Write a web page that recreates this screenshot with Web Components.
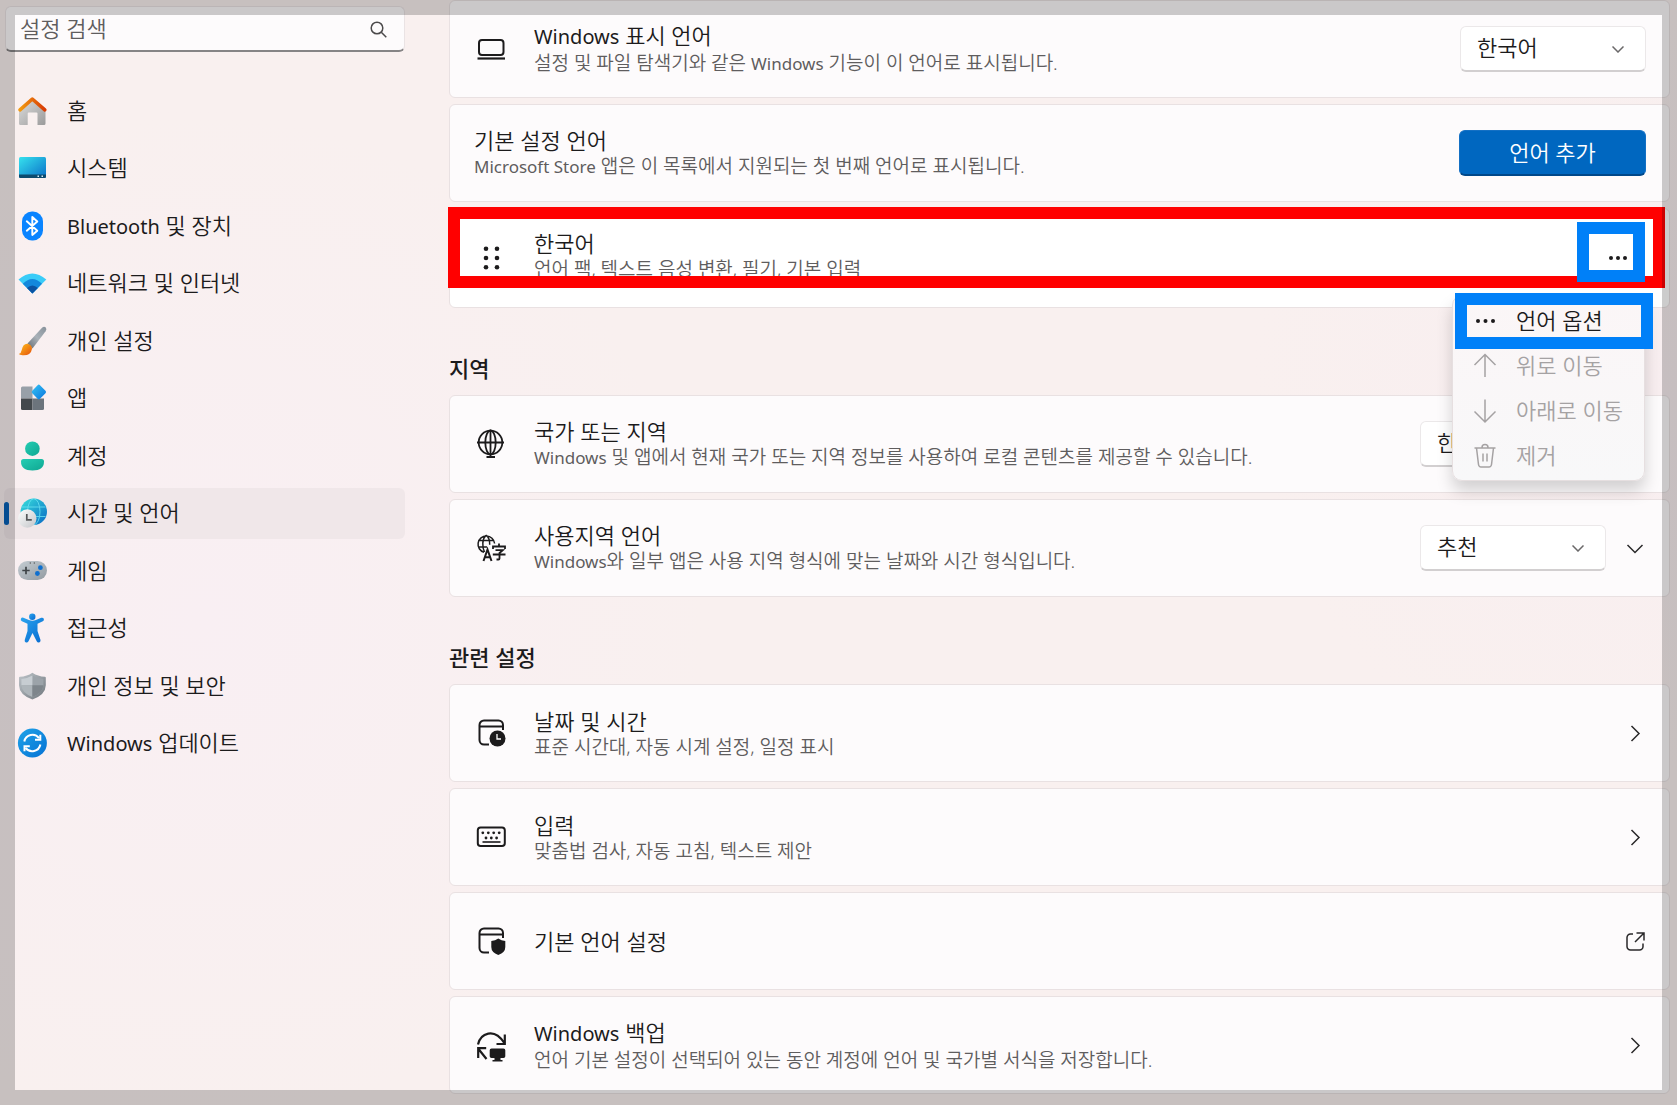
<!DOCTYPE html>
<html lang="ko">
<head>
<meta charset="utf-8">
<title>시간 및 언어</title>
<style>
  html, body { margin: 0; }
  body {
    min-height: 100vh;
    overflow: hidden;
    color: #1c1b1c;
    font-family: "Noto Sans", "Noto Sans CJK KR", sans-serif;
    font-size: 22px;
    font-weight: 350;
    background:
      radial-gradient(circle at 12% 56%, #f9eff3 0, #f9eff300 32%),
      radial-gradient(circle at 98% 35%, #f8eef0 0, #f8eef000 22%),
      #f9f0ef;
  }
</style>
</head>
<body>
<settings-page></settings-page>
<script>
const define = (name, html, setup) => {
  const template = document.createElement('template');
  template.innerHTML = html;
  customElements.define(name, class extends HTMLElement {
    static observedAttributes = ['name'];
    constructor() {
      super();
      this.attachShadow({ mode: 'open' }).append(template.content.cloneNode(true));
    }
    connectedCallback() { if (setup) setup(this, this.shadowRoot); }
    attributeChangedCallback() { if (setup) setup(this, this.shadowRoot); }
  });
};

const icons = {
  home: `<defs><linearGradient id="a" x2="1"><stop stop-color="#f29a10"/><stop offset="1" stop-color="#d83b04"/></linearGradient><linearGradient id="b" x2="1" y2="1"><stop stop-color="#dedede"/><stop offset="1" stop-color="#9a9a9a"/></linearGradient></defs>
    <path d="M2 14 15.3 3 28.5 14v13.500a1.500 1.500 0 0 1-1.500 1.500h-6.500V17.500q0-1-1-1h-7.800q-1 0-1 1V29H3.500A1.500 1.500 0 0 1 2 27.500Z" fill="url(#b)"/><path d="M3 13.800 15.300 3 27.800 13.800" fill="none" stroke="url(#a)" stroke-width="3.600" stroke-linecap="round" stroke-linejoin="round"/>`,
  system: `<defs><linearGradient id="a" x2="1" y2="1"><stop stop-color="#36e2ee"/><stop offset="1" stop-color="#0a6fc8"/></linearGradient></defs>
    <rect x="2" y="4" width="27" height="21" rx="1.500" fill="url(#a)"/><path d="M2 21.500h27v2a1.500 1.500 0 0 1-1.500 1.500h-24A1.500 1.500 0 0 1 2 23.500Z" fill="#0c4a6e"/><path d="M20.500 22.500h1.500v1.500h-1.500zM24.500 22.500h1.500v1.500h-1.500z" fill="#d6effa"/>`,
  bluetooth: `<rect x="5" y=".5" width="21" height="29" rx="10" fill="#0a84ff"/><path d="M9.800 10.300 20.300 19.700 15.300 24V6l5 4.500L9.800 19.700" fill="none" stroke="#fff" stroke-width="1.900" stroke-linejoin="round" stroke-linecap="round"/>`,
  wifi: `<path d="M1.500 11.500Q15.300-.5 29.300 11.500L15.400 25.500Z" fill="#3accf8"/><path d="M5.800 15.800Q15.300 6 25 15.800L15.400 25.500Z" fill="#1388dc"/><path d="M10 20q5.300-5 10.800 0l-5.400 5.500Z" fill="#0b53a2"/>`,
  brush: `<defs><linearGradient id="a" x1="1" x2="0" y2="1"><stop stop-color="#87919a"/><stop offset=".5" stop-color="#a9b1b8"/><stop offset="1" stop-color="#646c74"/></linearGradient><linearGradient id="b" x2="1" y2="1"><stop stop-color="#ffc21c"/><stop offset="1" stop-color="#e5500c"/></linearGradient></defs>
    <path d="M10.500 17.500 24.800 2q2-2 3.800-.7 1.600 1.800 0 4L15.500 22.500Z" fill="url(#a)"/><path d="M1.800 28q2.500-.8 3-4.200Q6 17.500 10.500 17.800q4.500 1 4.500 5Q14 29.800 5.500 29.300q-3-.2-3.700-1.300Z" fill="url(#b)"/>`,
  apps: `<defs><linearGradient id="a" x2="1" y2="1"><stop stop-color="#35c4f6"/><stop offset="1" stop-color="#0a74dc"/></linearGradient></defs>
    <path d="M4 5a1.500 1.500 0 0 1 1.500-1.500h10V15.500H4Z" fill="#98a0a8"/><path d="M4 15.500h11.500V27h-10A1.500 1.500 0 0 1 4 25.500Z" fill="#43484c"/><path d="M15.500 15.500H27v10a1.500 1.500 0 0 1-1.500 1.500h-10Z" fill="#6c747c"/><path d="m20.600 2.200q1.200-1.200 2.400 0l5.500 5.600q1.200 1.200 0 2.400l-5.500 5.600q-1.200 1.200-2.400 0l-5.300-5.600q-1.200-1.200 0-2.400Z" fill="url(#a)"/>`,
  account: `<defs><linearGradient id="a" x2="1" y2="1"><stop stop-color="#25cdb3"/><stop offset="1" stop-color="#0fa792"/></linearGradient></defs>
    <circle cx="15.400" cy="7.700" r="7.300" fill="url(#a)"/><path d="M4 20.500q0-2.500 2.500-2.500h18q2.500 0 2.500 2.500 0 9-11.500 9T4 20.500Z" fill="url(#a)"/>`,
  time: `<defs><linearGradient id="a" x2="1" y2="1"><stop stop-color="#38e0dc"/><stop offset="1" stop-color="#0868c4"/></linearGradient><linearGradient id="b" x2="1" y2="1"><stop stop-color="#fff"/><stop offset="1" stop-color="#c2c5c8"/></linearGradient></defs>
    <circle cx="16.800" cy="13.700" r="13.200" fill="url(#a)"/><g fill="none" stroke="#6ce4f4" stroke-width="1" opacity=".8"><ellipse cx="16.800" cy="13.700" rx="6.200" ry="13"/><path d="M5 9h23.500M5 18.500h23.500"/></g><circle cx="10.300" cy="20.500" r="9.200" fill="url(#b)"/><path d="M9.800 16v5.800h5" fill="none" stroke="#56585a" stroke-width="1.700"/>`,
  game: `<defs><linearGradient id="a" x2="1" y2="1"><stop stop-color="#c5cdd3"/><stop offset="1" stop-color="#929aa1"/></linearGradient></defs>
    <rect x="1" y="5" width="29" height="19" rx="9.500" fill="url(#a)"/><path d="M9 10.800v7.400M5.300 14.500h7.400" stroke="#3f4448" stroke-width="1.700"/><circle cx="23.400" cy="11.700" r="2.400" fill="#0f6fcf"/><circle cx="20.400" cy="17.500" r="2.400" fill="#0f6fcf"/><circle cx="13.300" cy="7" r=".7" fill="#555"/><circle cx="17.300" cy="7" r=".7" fill="#555"/>`,
  access: `<defs><linearGradient id="a" x2="1" y2="1"><stop stop-color="#2ba5ef"/><stop offset="1" stop-color="#0669cf"/></linearGradient></defs>
    <circle cx="15.300" cy="3.800" r="3.200" fill="url(#a)"/><path d="M3.900 5.700q.8-1.600 2.500-1l5.500 2.400q3.500 1.400 7 0l5.300-2.300q1.800-.6 2.600.9.700 1.700-1 2.600L20.500 10.700v7.300l3 8.900q.3 1.800-1.300 2.500-1.700.4-2.500-1.100L15.500 20l-4 8.300q-.9 1.500-2.600 1.100-1.600-.7-1.200-2.500l2.800-8.900v-7.300L4.900 8.300q-1.600-.9-1-2.600Z" fill="url(#a)"/>`,
  shield: `<defs><linearGradient id="a" x2="1" y2="1"><stop stop-color="#bfc5ca"/><stop offset="1" stop-color="#70777d"/></linearGradient></defs>
    <path d="M15.400 1.800q5.500 3.700 12.500 4 .9.100.9 1v7.500Q28.500 24 15.400 28.500 2.300 24 2 14.300V6.800q0-.9.900-1 7-.3 12.500-4Z" fill="url(#a)"/><path d="M15.400 4.500q5 3 11 3.400v6.400q-.3 7.700-11 11.700Z" fill="#9ca3a9"/><path d="M15.400 4.500q-5 3-11 3.400v6.400h11Z" fill="#c7cdd2"/><path d="M4.400 14.300h11V26q-10.700-4-11-11.700Z" fill="#aeb5ba"/><path d="M15.400 14.300h11q-.3 7.700-11 11.700Z" fill="#7e858b"/>`,
  update: `<defs><linearGradient id="a" x2="1" y2="1"><stop stop-color="#1fa3e8"/><stop offset="1" stop-color="#0672d4"/></linearGradient></defs>
    <circle cx="15.400" cy="15" r="14.500" fill="url(#a)"/><g fill="none" stroke="#fff" stroke-width="2"><path d="M7.300 13.500a8.300 8.300 0 0 1 14.800-3.300"/><path d="M23.400 16.500a8.300 8.300 0 0 1-14.800 3.300"/><path d="M23.300 6.800v5h-5.300M7.500 23.200v-5h5.300"/></g>`,
  laptop: `<g fill="none" stroke="#1c1b1c" stroke-width="2"><rect x="2" y="5" width="24.500" height="15" rx="3"/><path d="M.5 23.500h27.500" stroke-width="2.200"/></g>`,
  drag: `<g fill="#1c1b1c"><circle cx="9" cy="4.700" r="2.300"/><circle cx="20" cy="4.700" r="2.300"/><circle cx="9" cy="14" r="2.300"/><circle cx="20" cy="14" r="2.300"/><circle cx="9" cy="23.300" r="2.300"/><circle cx="20" cy="23.300" r="2.300"/></g>`,
  globe: `<g fill="none" stroke="#1c1b1c" stroke-width="1.800"><circle cx="13.500" cy="12.500" r="11.800"/><ellipse cx="13.500" cy="12.500" rx="5.200" ry="11.800"/><path d="M0 12.500h27M13.500-.5v28M9.500 27h8.500"/></g>`,
  region: `<g fill="none" stroke="#1c1b1c" stroke-width="1.500"><path d="M7 18.300A8.300 8.300 0 1 1 17.600 9.500M1.500 6.500h15M1.500 13h8.500M9 1.200C5 5 5 13 7.500 18M9 1.200c2.700 2 3.800 5.500 3.700 9.500"/><g stroke-width="2"><path d="m6.500 27 4-11.500L14.500 27M8 23.300h5"/><path d="M16 15v-2.500h12V15M22 9.500v3M18.500 16.200h7.300L22.500 19v5.500q0 1-1 1H19.500M15.800 20.500H28.500" stroke-width="1.800"/></g></g>`,
  date: `<path d="M12 25.500H7a4.500 4.500 0 0 1-4.500-4.500V6A4.500 4.500 0 0 1 7 1.500h14.500A4.500 4.500 0 0 1 26 6v5M2.500 7.500H26" fill="none" stroke="#1c1b1c" stroke-width="2"/><circle cx="20.500" cy="19.500" r="8" fill="#1c1b1c"/><path d="M20 15v5h4" fill="none" stroke="#fff" stroke-width="1.300"/>`,
  keyboard: `<rect x=".8" y="4.500" width="27" height="18.500" rx="2.800" fill="none" stroke="#1c1b1c" stroke-width="2"/><g fill="#1c1b1c"><circle cx="5.800" cy="9.800" r="1.400"/><circle cx="11.300" cy="9.800" r="1.400"/><circle cx="16.700" cy="9.800" r="1.400"/><circle cx="22.200" cy="9.800" r="1.400"/><circle cx="9" cy="15" r="1.400"/><circle cx="14.300" cy="15" r="1.400"/><circle cx="19.600" cy="15" r="1.400"/></g><path d="M5.500 19h18" stroke="#1c1b1c" stroke-width="1.600"/>`,
  admin: `<path d="M12 25.500H7a4.500 4.500 0 0 1-4.500-4.500V6A4.500 4.500 0 0 1 7 1.500h14.500A4.500 4.500 0 0 1 26 6v5M2.500 7.500H26" fill="none" stroke="#1c1b1c" stroke-width="2"/><path d="M21.300 11.500q3 2.300 7 2.500v6q0 5.500-7 8-7-2.500-7-8v-6q4-.2 7-2.500Z" fill="#1c1b1c"/>`,
  backup: `<g fill="none" stroke="#1c1b1c" stroke-width="2.200"><path d="M1 13.500C3.500 2.500 17-4 27.300 12M27.800 3.500v9.500h-8.300M9.500 28 1.500 18M1.200 27V17.200h8"/></g><path d="M14.500 17.500h12q1.800 0 1.800 1.800v6q0 1.800-1.800 1.800h-3v1.900h2v1.500h-10V29h2v-1.900h-3q-1.800 0-1.800-1.800v-6q0-1.800 1.800-1.800Z" fill="#1c1b1c"/>`,
};

define('svg-icon', `
  <style>:host { display: block; flex: none; width: var(--icon-size, 28px); height: var(--icon-size, 28px); }
  svg { display: block; width: 100%; height: 100%; overflow: visible; }</style>
  <svg aria-hidden="true"></svg>`, (host, root) => {
  const size = host.getAttribute('size') || '28';
  const svg = root.querySelector('svg');
  svg.setAttribute('viewBox', `0 0 ${size} ${size}`);
  svg.innerHTML = icons[host.getAttribute('name')] || '';
});

define('latin-text', `
  <style>:host { font-size: var(--latin-size, 20px); font-weight: 400; }</style><slot></slot>`);

define('search-field', `
  <style>
    :host { display: block; }
    label { display: flex; align-items: center; box-sizing: border-box; height: 46px; padding: 0 17px 0 14px;
      border: 1px solid #eae3e4; border-bottom: 2px solid #868485; border-radius: 6px; background: #fdfbfc; }
    input { flex: 1; min-width: 0; padding: 0 0 2px; border: 0; outline: 0; background: none; font: inherit; color: inherit; }
    input::placeholder { color: #5f5d5e; opacity: 1; }
    svg { width: 18px; height: 18px; }
  </style>
  <label><input type="search" placeholder="설정 검색" aria-label="설정 검색">
    <svg viewBox="0 0 18 18" fill="none" stroke="#4c4a4b" stroke-width="1.500"><circle cx="8" cy="8" r="5.800"/><path d="m12.300 12.300 5 5"/></svg></label>`);

define('nav-item', `
  <style>
    :host { display: block; --icon-size: 30px; }
    a { display: flex; align-items: center; gap: 20px; height: 51px; padding-left: 13px; border-radius: 6px; color: inherit; text-decoration: none; }
    span { padding-bottom: 4px; }
    :host([selected]) a { background: #f0e7e9; }
    :host([selected]) a::before { content: ""; width: 5px; height: 23px; margin: 0 -12px 0 -13px; border-radius: 3px; background: #0560b6; }
  </style>
  <a href="#"><svg-icon size="30"></svg-icon><span><slot></slot></span></a>`, (host, root) => {
  root.querySelector('svg-icon').setAttribute('name', host.getAttribute('icon'));
});

define('setting-card', `
  <style>
    :host { display: block; }
    .card { display: flex; align-items: center; box-sizing: border-box; min-height: 98px; padding: 0 23px 0 24px;
      border: 1px solid #e9e1e2; border-radius: 6px; background: #fdfbfc; }
    .icon { box-sizing: border-box; width: 60px; padding-left: 3px; }
    :host(:not([icon])) .icon { display: none; }
    .text { flex: 1; min-width: 0; }
    .title { line-height: 26px; --latin-size: 20px; }
    .desc { padding-top: 1px; color: #5f5d5e; font-size: 19px; line-height: 24px; --latin-size: 17px; }
    .desc:not(.used) { display: none; }
    .action { display: flex; align-items: center; gap: 20px; }
    :host([current]) .card { min-height: 100px; background: #fff; }
    :host([current]) .text { padding-bottom: 6px; }
  </style>
  <div class="card">
    <div class="icon"><svg-icon></svg-icon></div>
    <div class="text"><div class="title"><slot name="title"></slot></div><div class="desc"><slot name="desc"></slot></div></div>
    <div class="action"><slot></slot></div>
  </div>`, (host, root) => {
  const name = host.getAttribute('icon');
  if (name) root.querySelector('svg-icon').setAttribute('name', name);
  root.querySelector('.desc').classList.toggle('used', !!host.querySelector('[slot=desc]'));
});

define('drop-down', `
  <style>
    :host { display: grid; width: 186px; align-items: center; }
    select, svg { grid-area: 1 / 1; }
    select { appearance: none; box-sizing: border-box; width: 100%; height: 46px; padding: 0 16px 3px; font: inherit; color: inherit;
      border: 1px solid #ebe8e9; border-bottom: 2px solid #d2cfd0; border-radius: 6px; background: #fff; }
    svg { justify-self: end; width: 12px; height: 7px; margin-right: 22px; pointer-events: none; }
  </style>
  <select><option></option></select>
  <svg viewBox="0 0 12 7" fill="none" stroke="#6a6869" stroke-width="1.500"><path d="m.5.5 5.500 5.500L11.500.5"/></svg>`, (host, root) => {
  root.querySelector('option').textContent = host.getAttribute('value');
  root.querySelector('select').setAttribute('aria-label', host.getAttribute('label'));
});

define('glyph-button', `
  <style>
    :host { display: block; }
    button { display: grid; place-items: center; width: 20px; height: 20px; padding: 0; border: 0; background: none; }
    svg { width: 20px; height: 20px; overflow: visible; fill: none; stroke: #2a292a; stroke-width: 1.500; }
  </style>
  <button type="button"><svg viewBox="0 0 20 20"></svg></button>`, (host, root) => {
  const shapes = {
    right: '<path d="m5.500 3 7.500 7.500L5.500 18"/>',
    down: '<path d="m1.500 7 7.500 7.500L16.500 7"/>',
    open: '<path d="M7 3H4.500A3.500 3.500 0 0 0 1 6.500v9A3.500 3.500 0 0 0 4.500 19h9a3.500 3.500 0 0 0 3.500-3.500v-3M10.500 2H18v7.500M18 2l-9 9"/>',
  };
  root.querySelector('svg').innerHTML = shapes[host.getAttribute('shape')];
  root.querySelector('button').setAttribute('aria-label', host.getAttribute('label'));
});

define('option-menu', `
  <style>
    :host { display: block; box-sizing: border-box; padding: 2px 0; border: 1px solid #e6dfe0; border-radius: 10px;
      background: linear-gradient(#fbf6f7, #f8f8f9); box-shadow: 0 10px 16px #0000002b; }
    button { display: flex; align-items: center; gap: 20px; width: 100%; height: 45px; padding: 0 0 0 21px; border: 0; background: none;
      font: inherit; color: inherit; white-space: nowrap; }
    button:disabled { color: #a5a2a3; }
    span { padding-bottom: 4px; }
    svg { flex: none; width: 22px; height: 24px; fill: none; stroke: currentColor; stroke-width: 1.500; overflow: visible; }
  </style>
  <button type="button"><svg viewBox="0 0 22 24"><g fill="currentColor" stroke="none"><circle cx="4" cy="12" r="2"/><circle cx="11.500" cy="12" r="2"/><circle cx="19" cy="12" r="2"/></g></svg><span>언어 옵션</span></button>
  <button type="button" disabled><svg viewBox="0 0 22 24"><path d="M11 23V.5M.5 11 11 .5 21.500 11"/></svg><span>위로 이동</span></button>
  <button type="button" disabled><svg viewBox="0 0 22 24"><path d="M11 .5V23M.5 12.500 11 23l10.500-10.500"/></svg><span>아래로 이동</span></button>
  <button type="button" disabled><svg viewBox="0 0 22 24"><path d="M.5 4h21M2.500 4l2 16.500q.4 2.500 2.500 2.500h8q2.100 0 2.500-2.500L19.500 4M8 3.500q0-3 3-3t3 3M9 9.500v8M13 9.500v8"/></svg><span>제거</span></button>`);

define('language-row', `
  <style>
    :host { display: block; position: relative; }
    button { display: grid; place-items: center; width: 44px; height: 36px; margin-right: 6px; padding: 0; border: 0; background: none; }
    svg { width: 20px; height: 6px; fill: #1c1b1c; }
    .mark { position: absolute; box-sizing: border-box; border: 12px solid #0080f8; pointer-events: none; }
    .row { z-index: 1; top: -1px; left: -1px; right: 5px; height: 81px; border-color: #f00; }
    .more { z-index: 2; top: 14px; right: 25px; width: 68px; height: 60px; }
    option-menu { position: absolute; z-index: 3; top: 87px; right: 25px; width: 193px; }
    .option { z-index: 4; top: 85px; right: 17px; width: 198px; height: 56px; }
  </style>
  <setting-card icon="drag" current>
    <span slot="title">한국어</span>
    <span slot="desc">언어 팩, 텍스트 음성 변환, 필기, 기본 입력</span>
    <button type="button" aria-label="언어 메뉴"><svg viewBox="0 0 20 6"><circle cx="3" cy="3" r="2"/><circle cx="10" cy="3" r="2"/><circle cx="17" cy="3" r="2"/></svg></button>
  </setting-card>
  <option-menu></option-menu>
  <div class="mark row"></div><div class="mark more"></div><div class="mark option"></div>`);

define('settings-page', `
  <style>
    :host { display: grid; grid-template-columns: 400px minmax(0, 1fr); column-gap: 44px; padding: 0 7px 10px 5px; }
    aside { padding-top: 6px; }
    nav { display: flex; flex-direction: column; justify-content: space-between; height: 684px; margin-top: 33px; margin-left: -1px; }
    section { display: grid; gap: 6px; }
    h2 { margin: 46px 0 13px; font-size: 22px; line-height: 28px; font-weight: 500; }
    .add { width: 187px; height: 46px; padding: 0 0 3px; border: 1px solid #1470c4; border-bottom: 2px solid #00488a; border-radius: 6px;
      background: #0067c0; color: #fff; font: inherit; }
    .frame { position: fixed; z-index: 10; inset: 0; border: 15px solid #00000033; pointer-events: none; }
  </style>
  <aside>
    <search-field></search-field>
    <nav>
      <nav-item icon="home">홈</nav-item>
      <nav-item icon="system">시스템</nav-item>
      <nav-item icon="bluetooth"><latin-text>Bluetooth</latin-text> 및 장치</nav-item>
      <nav-item icon="wifi">네트워크 및 인터넷</nav-item>
      <nav-item icon="brush">개인 설정</nav-item>
      <nav-item icon="apps">앱</nav-item>
      <nav-item icon="account">계정</nav-item>
      <nav-item icon="time" selected>시간 및 언어</nav-item>
      <nav-item icon="game">게임</nav-item>
      <nav-item icon="access">접근성</nav-item>
      <nav-item icon="shield">개인 정보 및 보안</nav-item>
      <nav-item icon="update"><latin-text>Windows</latin-text> 업데이트</nav-item>
    </nav>
  </aside>
  <main>
    <section>
      <setting-card icon="laptop"><span slot="title"><latin-text>Windows</latin-text> 표시 언어</span>
        <span slot="desc">설정 및 파일 탐색기와 같은 <latin-text>Windows</latin-text> 기능이 이 언어로 표시됩니다.</span>
        <drop-down value="한국어" label="Windows 표시 언어"></drop-down></setting-card>
      <setting-card><span slot="title">기본 설정 언어</span>
        <span slot="desc"><latin-text>Microsoft Store</latin-text> 앱은 이 목록에서 지원되는 첫 번째 언어로 표시됩니다.</span>
        <button class="add" type="button">언어 추가</button></setting-card>
      <language-row></language-row>
    </section>
    <h2>지역</h2>
    <section>
      <setting-card icon="globe"><span slot="title">국가 또는 지역</span>
        <span slot="desc"><latin-text>Windows</latin-text> 및 앱에서 현재 국가 또는 지역 정보를 사용하여 로컬 콘텐츠를 제공할 수 있습니다.</span>
        <drop-down value="한국" label="국가 또는 지역"></drop-down><glyph-button shape="down" label="펼치기"></glyph-button></setting-card>
      <setting-card icon="region"><span slot="title">사용지역 언어</span>
        <span slot="desc"><latin-text>Windows</latin-text>와 일부 앱은 사용 지역 형식에 맞는 날짜와 시간 형식입니다.</span>
        <drop-down value="추천" label="사용지역 언어"></drop-down><glyph-button shape="down" label="펼치기"></glyph-button></setting-card>
    </section>
    <h2>관련 설정</h2>
    <section>
      <setting-card icon="date"><span slot="title">날짜 및 시간</span><span slot="desc">표준 시간대, 자동 시계 설정, 일정 표시</span>
        <glyph-button shape="right" label="날짜 및 시간"></glyph-button></setting-card>
      <setting-card icon="keyboard"><span slot="title">입력</span><span slot="desc">맞춤법 검사, 자동 고침, 텍스트 제안</span>
        <glyph-button shape="right" label="입력"></glyph-button></setting-card>
      <setting-card icon="admin"><span slot="title">기본 언어 설정</span>
        <glyph-button shape="open" label="기본 언어 설정"></glyph-button></setting-card>
      <setting-card icon="backup"><span slot="title"><latin-text>Windows</latin-text> 백업</span>
        <span slot="desc">언어 기본 설정이 선택되어 있는 동안 계정에 언어 및 국가별 서식을 저장합니다.</span>
        <glyph-button shape="right" label="Windows 백업"></glyph-button></setting-card>
    </section>
  </main>
  <div class="frame"></div>`);
</script>
</body>
</html>
